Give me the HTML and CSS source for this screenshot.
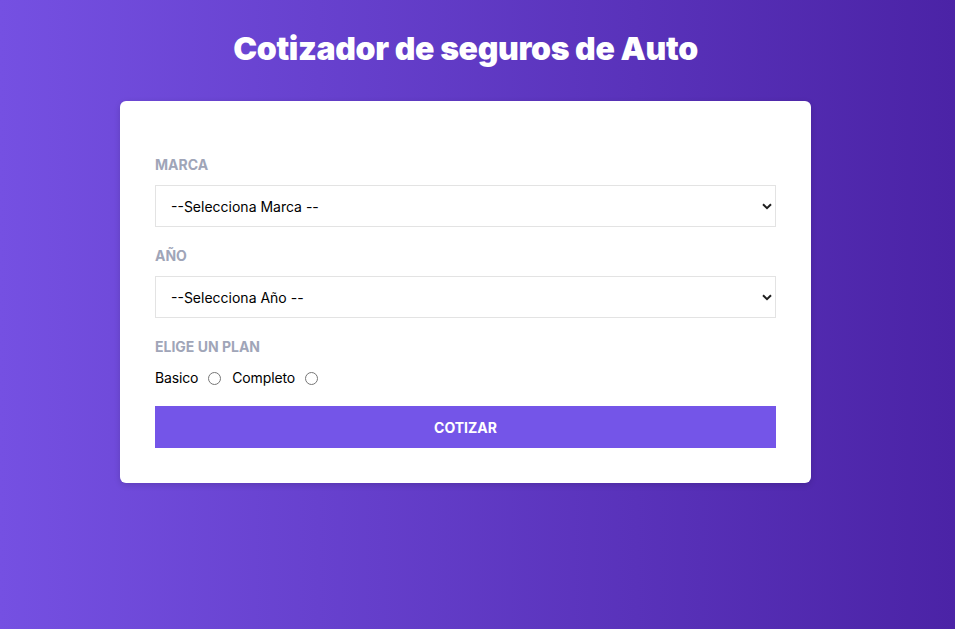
FILE: index.html
```html
<!DOCTYPE html>
<html lang="es">
<head>
<meta charset="utf-8">
<title>Cotizador de seguros de Auto</title>
<link rel="stylesheet" href="styles.css">
</head>
<body>
<div class="app">
  <h1 class="title">Cotizador de seguros de Auto</h1>
  <form class="card">
    <div class="field">
      <label class="label" for="marca">Marca</label>
      <div class="select-wrap">
        <select id="marca" class="select">
          <option>--Selecciona Marca --</option>
        </select>
        <svg class="chevron" width="10" height="7" viewBox="0 0 10 7"><path d="M1 1.2 L5 5.2 L9 1.2" fill="none" stroke="#1f1f1f" stroke-width="2"/></svg>
      </div>
    </div>
    <div class="field">
      <label class="label" for="anio">Año</label>
      <div class="select-wrap">
        <select id="anio" class="select">
          <option>--Selecciona Año --</option>
        </select>
        <svg class="chevron" width="10" height="7" viewBox="0 0 10 7"><path d="M1 1.2 L5 5.2 L9 1.2" fill="none" stroke="#1f1f1f" stroke-width="2"/></svg>
      </div>
    </div>
    <div class="field">
      <span class="label">Elige un plan</span>
      <div class="radios">
        <label class="radio-label" for="basico">Basico</label>
        <input class="radio" type="radio" id="basico" name="plan">
        <label class="radio-label" for="completo">Completo</label>
        <input class="radio" type="radio" id="completo" name="plan">
      </div>
    </div>
    <button type="button" class="button">Cotizar</button>
  </form>
</div>
</body>
</html>
```
FILE: styles.css
```css
* { box-sizing: border-box; }
html, body { margin: 0; }
body {
  min-height: 100vh;
  background: linear-gradient(to right, #7550e2, #4b23a6);
  font-family: Inter, "Noto Sans", sans-serif;
  padding-right: 24px;
}
.app {
  width: 691px;
  margin: 0 auto;
  padding-top: 30px;
}
.title {
  margin: 0;
  text-align: center;
  color: #fff;
  font-size: 32px;
  font-weight: 900;
  line-height: 38px;
  letter-spacing: -0.35px;
}
.card {
  margin-top: 33px;
  background: #fff;
  border-radius: 6px;
  padding: 35px;
  box-shadow: 0 2px 6px rgba(0,0,0,0.15);
}
.field { margin-top: 20px; }
.label {
  display: block;
  color: #a0a5b8;
  font-size: 14px;
  font-weight: 700;
  line-height: 17px;
  text-transform: uppercase;
  margin-bottom: 12px;
}
.select-wrap { position: relative; }
.select {
  display: block;
  width: 100%;
  height: 42px;
  appearance: none;
  -webkit-appearance: none;
  background: #fff;
  border: 1px solid #e3e3e3;
  border-radius: 0;
  padding: 0 15px;
  font-family: Inter, "Noto Sans", sans-serif;
  font-size: 14px;
  color: #000;
}
.chevron {
  position: absolute;
  right: 4px;
  top: 18px;
  pointer-events: none;
}
.radios {
  display: flex;
  align-items: center;
  font-size: 14px;
  color: #000;
  height: 21px;
  padding-top: 1px;
  letter-spacing: -0.15px;
}
.radio-label { line-height: 20px; }
.radio {
  margin: 0 11px 0 10px;
  width: 13px;
  height: 13px;
}
.button {
  display: block;
  width: 100%;
  height: 42px;
  margin-top: 18px;
  border: 0;
  background: #7455e8;
  color: #fff;
  font-family: Inter, "Noto Sans", sans-serif;
  font-size: 14px;
  font-weight: 700;
  text-transform: uppercase;
}
```
